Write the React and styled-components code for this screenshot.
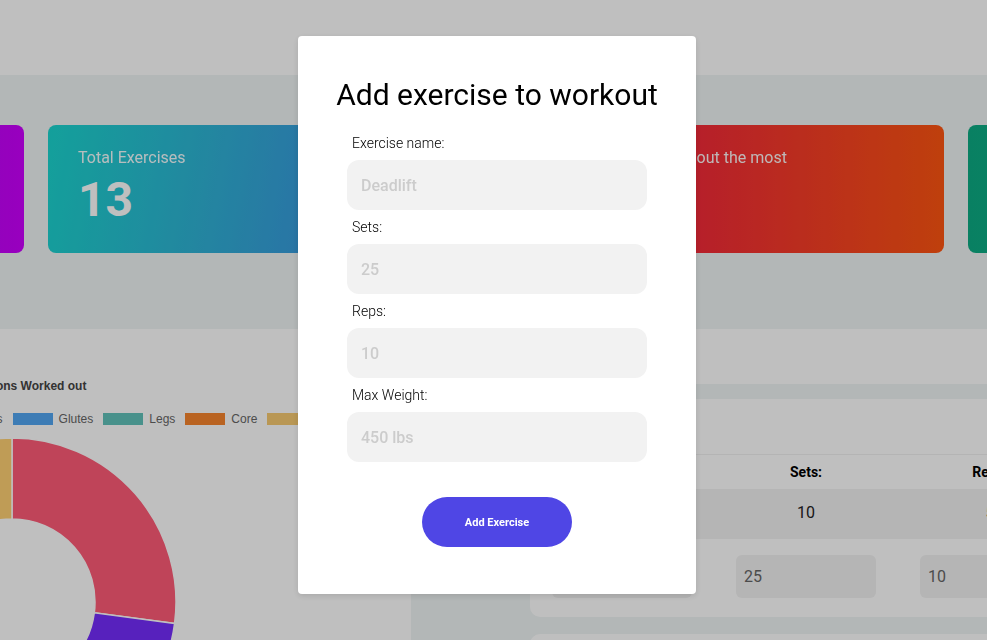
import React from "react";
import styled, { createGlobalStyle } from "styled-components";

const GlobalStyle = createGlobalStyle`
  html, body {
    margin: 0;
    padding: 0;
  }
  body {
    background: #eff4f4;
    font-family: Roboto, "Liberation Sans", sans-serif;
    overflow: hidden;
  }
`;

const cards = [
  { w: 283, bg: "linear-gradient(90deg, #8a1fe0, #cc00ff)", label: "Total Workouts", value: "8" },
  { w: 283, bg: "linear-gradient(100deg, #1ad6cf, #2fb3d6 55%, #3a96e0)", label: "Total Exercises", value: "13" },
  { w: 168, bg: "linear-gradient(90deg, #f7971e, #ffd200)", label: "Total Sets", value: "42" },
  { w: 397, bg: "linear-gradient(90deg, #ee1050, #ff5511)", label: "Exercise worked out the most", value: "" },
  { w: 283, bg: "linear-gradient(90deg, #0dab83, #11c48f)", label: "Heaviest lift", value: "450" },
];

const slices = [
  { label: "Chest", color: "#ff5b77", deg: 97.5 },
  { label: "Back", color: "#742cfc", deg: 40 },
  { label: "Triceps", color: "#ff9ccf", deg: 30 },
  { label: "Biceps", color: "#9ad66b", deg: 35 },
  { label: "Glutes", color: "#55abf9", deg: 45 },
  { label: "Legs", color: "#63c8c0", deg: 40 },
  { label: "Core", color: "#ff892d", deg: 30 },
  { label: "Shoulders", color: "#ffd073", deg: 42.5 },
];

const pt = (c, rad, a) => {
  const t = (a * Math.PI) / 180;
  return [c + rad * Math.sin(t), c - rad * Math.cos(t)];
};

const arc = (c, R, r, a0, a1) => {
  const large = a1 - a0 > 180 ? 1 : 0;
  const [x0, y0] = pt(c, R, a0);
  const [x1, y1] = pt(c, R, a1);
  const [x2, y2] = pt(c, r, a1);
  const [x3, y3] = pt(c, r, a0);
  return `M${x0} ${y0} A${R} ${R} 0 ${large} 1 ${x1} ${y1} L${x2} ${y2} A${r} ${r} 0 ${large} 0 ${x3} ${y3} Z`;
};

const Donut = () => {
  let start = 0;
  return (
    <DonutSvg width="328" height="328" viewBox="0 0 328 328">
      {slices.map((s) => {
        const d = arc(164, 164, 83, start, start + s.deg);
        start += s.deg;
        return <path key={s.label} d={d} fill={s.color} stroke="#fff" strokeWidth="1.5" />;
      })}
    </DonutSvg>
  );
};

const App = () => {
  return (
    <Page>
      <GlobalStyle />
      <Header />
      <CardsRow>
        {cards.map((c) => (
          <Card key={c.label} $w={c.w} $bg={c.bg}>
            <CardLabel>{c.label}</CardLabel>
            <CardValue>{c.value}</CardValue>
          </Card>
        ))}
      </CardsRow>
      <Bottom>
        <ChartPanel>
          <ChartBox>
            <ChartTitle>Body Regions Worked out</ChartTitle>
            <Legend>
              {slices.map((s) => (
                <LegendItem key={s.label}>
                  <Swatch $c={s.color} />
                  {s.label}
                </LegendItem>
              ))}
            </Legend>
            <Donut />
          </ChartBox>
        </ChartPanel>
        <RightCol>
          <InfoBar />
          <Panel>
            <PanelHead>Push Day</PanelHead>
            <HeadRow>
              <span>Exercise:</span>
              <span>Sets:</span>
              <span>Reps:</span>
            </HeadRow>
            <DataRow>
              <span>Bench Press</span>
              <span>10</span>
              <span>5</span>
            </DataRow>
            <InputRow>
              <CellInput defaultValue="Deadlift" readOnly />
              <CellInput defaultValue="25" readOnly />
              <CellInput defaultValue="10" readOnly />
            </InputRow>
          </Panel>
          <Panel $next />
        </RightCol>
      </Bottom>

      <Overlay>
        <Modal>
          <ModalTitle>Add exercise to workout</ModalTitle>
          <FieldLabel>Exercise name:</FieldLabel>
          <Field placeholder="Deadlift" />
          <FieldLabel>Sets:</FieldLabel>
          <Field placeholder="25" />
          <FieldLabel>Reps:</FieldLabel>
          <Field placeholder="10" />
          <FieldLabel>Max Weight:</FieldLabel>
          <Field placeholder="450 lbs" />
          <AddButton>Add Exercise</AddButton>
        </Modal>
      </Overlay>
    </Page>
  );
};

const Page = styled.div`
  position: relative;
  width: 987px;
  height: 640px;
  overflow: hidden;
`;

const Header = styled.header`
  height: 75px;
  background: #fff;
`;

const CardsRow = styled.div`
  display: flex;
  gap: 24px;
  height: 254px;
  padding-top: 50px;
  box-sizing: border-box;
  margin-left: -259px;
`;

const Card = styled.div`
  flex: 0 0 ${(p) => p.$w}px;
  height: 128px;
  box-sizing: border-box;
  padding: 23px 30px;
  border-radius: 8px;
  background: ${(p) => p.$bg};
  color: #fff;
  overflow: hidden;
`;

const CardLabel = styled.div`
  font-size: 16px;
  line-height: 19px;
  white-space: nowrap;
  opacity: 0.95;
`;

const CardValue = styled.div`
  margin-top: 5px;
  font-size: 48px;
  font-weight: 700;
  line-height: 56px;
`;

const Bottom = styled.div`
  display: grid;
  grid-template-columns: 411px 1fr;
  height: 311px;
`;

const ChartPanel = styled.section`
  background: #fff;
  overflow: hidden;
  padding-top: 50px;
`;

const ChartBox = styled.div`
  width: 740px;
  margin-left: -358.5px;
  display: flex;
  flex-direction: column;
  align-items: center;
`;

const ChartTitle = styled.div`
  font: bold 12px/14px "Liberation Sans", Arial, sans-serif;
  color: #444;
`;

const Legend = styled.div`
  display: flex;
  gap: 10px;
  margin-top: 20px;
  font: 12px/12px "Liberation Sans", Arial, sans-serif;
  color: #666;
  white-space: nowrap;
`;

const LegendItem = styled.div`
  display: flex;
  align-items: center;
  gap: 6px;
`;

const Swatch = styled.span`
  width: 40px;
  height: 12px;
  box-sizing: border-box;
  background: ${(p) => p.$c};
  border: 1px solid ${(p) => p.$c};
  filter: brightness(0.97);
`;

const DonutSvg = styled.svg`
  display: block;
  margin-top: 13px;
  flex-shrink: 0;
`;

const RightCol = styled.div`
  display: flex;
  flex-direction: column;
`;

const InfoBar = styled.div`
  height: 55px;
  flex-shrink: 0;
  background: #fff;
`;

const Panel = styled.section`
  flex-shrink: 0;
  margin: ${(p) => (p.$next ? "17px 0 0 119px" : "15px 0 0 119px")};
  height: ${(p) => (p.$next ? "120px" : "auto")};
  background: #fff;
  border-radius: 10px;
  overflow: hidden;
`;

const PanelHead = styled.div`
  height: 55px;
  padding-left: 24px;
  border-bottom: 1px solid #f0f0f0;
  font-size: 20px;
  line-height: 55px;
  color: #222;
`;

const Row = styled.div`
  display: grid;
  grid-template-columns: repeat(3, 184px);
  align-items: center;
  text-align: center;
`;

const HeadRow = styled(Row)`
  height: 34px;
  font-size: 14px;
  font-weight: 700;
  color: #000;
`;

const DataRow = styled(Row)`
  height: 50px;
  padding-bottom: 4px;
  box-sizing: border-box;
  background: #f2f2f2;
  font-size: 16px;
  color: #222;
`;

const InputRow = styled(Row)`
  height: 78px;
  box-sizing: border-box;
  padding-top: 16px;
  align-items: start;
`;

const CellInput = styled.input`
  width: 140px;
  height: 43px;
  margin: 0 22px;
  box-sizing: border-box;
  border: none;
  border-radius: 6px;
  background: #f2f2f2;
  padding: 0 8px;
  font: 16px Roboto, sans-serif;
  color: #666;
  outline: none;
`;

const Overlay = styled.div`
  position: fixed;
  inset: 0;
  background: rgba(0, 0, 0, 0.25);
  display: flex;
  justify-content: center;
  align-items: flex-start;
  padding: 36px 0 0 7px;
  box-sizing: border-box;
`;

const Modal = styled.div`
  width: 398px;
  box-sizing: border-box;
  padding: 41px 49px 47px;
  background: #fff;
  border-radius: 4px;
  box-shadow: 0 2px 6px rgba(0, 0, 0, 0.12);
`;

const ModalTitle = styled.h2`
  margin: 0 -49px 14px;
  font-size: 30px;
  font-weight: 400;
  line-height: 35px;
  text-align: center;
  color: #000;
  white-space: nowrap;
`;

const FieldLabel = styled.label`
  display: block;
  height: 34px;
  padding-left: 5px;
  font-size: 14px;
  font-weight: 300;
  line-height: 34px;
  color: #000;
`;

const Field = styled.input`
  display: block;
  width: 300px;
  height: 50px;
  box-sizing: border-box;
  padding: 0 14px;
  border: none;
  border-radius: 12px;
  background: #f2f2f2;
  font: 500 16px Roboto, sans-serif;
  color: #333;
  outline: none;

  &::placeholder {
    color: #ccc;
  }
`;

const AddButton = styled.button`
  display: block;
  width: 150px;
  height: 50px;
  margin: 35px auto 0;
  border: none;
  border-radius: 25px;
  background: #4f46e5;
  color: #fff;
  font: 700 11px Roboto, sans-serif;
  cursor: pointer;
`;

export default App;
